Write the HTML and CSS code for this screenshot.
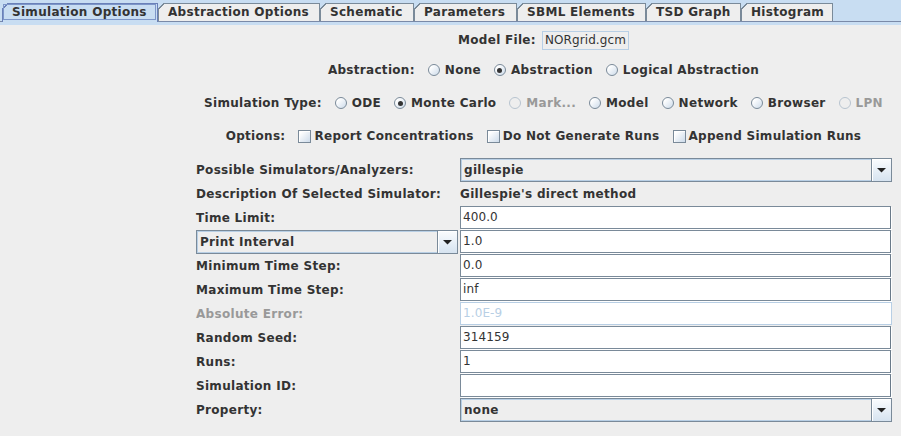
FILE: index.html
```html
<!DOCTYPE html>
<html>
<head>
<meta charset="utf-8">
<link rel="stylesheet" href="styles.css">
</head>
<body>
<div class="window">
  <div class="tabs">
    <div class="tab sel w1"><span class="focus">Simulation Options</span></div>
    <div class="tab w2">Abstraction Options</div>
    <div class="tab w3">Schematic</div>
    <div class="tab w4">Parameters</div>
    <div class="tab w5">SBML Elements</div>
    <div class="tab w6">TSD Graph</div>
    <div class="tab w7">Histogram</div>
  </div>
  <div class="band"></div>
  <div class="content">
    <div class="top">
      <div class="row row-model">
        <span class="lbl">Model File:</span>
        <span class="ro-field">NORgrid.gcm</span>
      </div>
      <div class="row row-opt">
        <span class="lbl">Abstraction:</span>
        <span class="opt"><span class="radio"></span>None</span>
        <span class="opt"><span class="radio on"></span>Abstraction</span>
        <span class="opt"><span class="radio"></span>Logical Abstraction</span>
      </div>
      <div class="row row-opt">
        <span class="lbl">Simulation Type:</span>
        <span class="opt"><span class="radio"></span>ODE</span>
        <span class="opt"><span class="radio on"></span>Monte Carlo</span>
        <span class="opt dis"><span class="radio"></span>Mark...</span>
        <span class="opt"><span class="radio"></span>Model</span>
        <span class="opt"><span class="radio"></span>Network</span>
        <span class="opt"><span class="radio"></span>Browser</span>
        <span class="opt dis"><span class="radio"></span>LPN</span>
      </div>
      <div class="row row-opt">
        <span class="lbl">Options:</span>
        <span class="opt"><span class="check"></span>Report Concentrations</span>
        <span class="opt"><span class="check"></span>Do Not Generate Runs</span>
        <span class="opt"><span class="check"></span>Append Simulation Runs</span>
      </div>
    </div>

    <div class="form">
      <div class="cell lbl">Possible Simulators/Analyzers:</div>
      <div class="combo"><span class="combo-text">gillespie</span><span class="combo-btn"><svg width="9" height="5" viewBox="0 0 9 5"><polygon points="0,0 9,0 4.5,4.5" fill="#222"/></svg></span></div>

      <div class="cell lbl">Description Of Selected Simulator:</div>
      <div class="cell lbl">Gillespie's direct method</div>

      <div class="cell lbl">Time Limit:</div>
      <div class="field">400.0</div>

      <div class="combo"><span class="combo-text">Print Interval</span><span class="combo-btn"><svg width="9" height="5" viewBox="0 0 9 5"><polygon points="0,0 9,0 4.5,4.5" fill="#222"/></svg></span></div>
      <div class="field">1.0</div>

      <div class="cell lbl">Minimum Time Step:</div>
      <div class="field">0.0</div>

      <div class="cell lbl">Maximum Time Step:</div>
      <div class="field">inf</div>

      <div class="cell lbl dis">Absolute Error:</div>
      <div class="field dis">1.0E-9</div>

      <div class="cell lbl">Random Seed:</div>
      <div class="field">314159</div>

      <div class="cell lbl">Runs:</div>
      <div class="field">1</div>

      <div class="cell lbl">Simulation ID:</div>
      <div class="field"></div>

      <div class="cell lbl">Property:</div>
      <div class="combo"><span class="combo-text">none</span><span class="combo-btn"><svg width="9" height="5" viewBox="0 0 9 5"><polygon points="0,0 9,0 4.5,4.5" fill="#222"/></svg></span></div>
    </div>
  </div>
</div>
</body>
</html>
```

FILE: styles.css
```css
html, body {
  margin: 0;
  padding: 0;
  background: #eeeeee;
}
body {
  font-family: "DejaVu Sans", sans-serif;
  font-size: 12px;
  color: #333333;
  width: 901px;
  height: 436px;
  overflow: hidden;
}
.window {
  width: 901px;
  height: 436px;
  display: flex;
  flex-direction: column;
}

/* ---------- tabs ---------- */
.tabs {
  display: flex;
  align-items: flex-end;
  background: #c8ddf2;
  height: 22px;
  box-sizing: border-box;
  padding: 3px 0 0 2px;
  border-bottom: 1px solid #7a8aa8;
}
.tab {
  --b: #7a8a99;
  --bg: #eeeeee;
  height: 18px;
  box-sizing: border-box;
  border-right: 1px solid var(--b);
  padding-left: 10px;
  line-height: 18px;
  font-weight: bold;
  letter-spacing: 0.3px;
  white-space: nowrap;
  flex: none;
  background:
    linear-gradient(var(--b), var(--b)) 6px 0 / 100% 1px no-repeat,
    linear-gradient(var(--b), var(--b)) 0 6px / 1px 100% no-repeat,
    linear-gradient(135deg, transparent 4.2px, var(--b) 4.2px, var(--b) 5.3px, var(--bg) 5.3px);
}
.tab.sel {
  --b: #6a80b8;
  --bg: #c8ddf2;
  position: relative;
  height: 19px;
  margin-bottom: -1px;
  padding-left: 1px;
  padding-top: 1px;
}
.focus {
  display: block;
  height: 16px;
  line-height: 14px;
  box-sizing: border-box;
  border: 1px solid #7d96c8;
  padding-left: 8px;
  margin-right: 1px;
}
.w1 { width: 156px; }
.w2 { width: 162px; }
.w3 { width: 94px; }
.w4 { width: 103px; }
.w5 { width: 129px; }
.w6 { width: 95px; }
.w7 { width: 92px; }

.band {
  height: 3px;
  background: #c8ddf2;
  flex: none;
}
.content {
  flex: 1;
  background: #eeeeee;
}

/* ---------- top options ---------- */
.top {
  margin-left: 186px;
  width: 715px;
  padding-top: 5px;
}
.row {
  display: flex;
  justify-content: center;
  align-items: center;
  height: 20px;
  white-space: nowrap;
}
.row-opt {
  margin-top: 13px;
}
.row-model + .row-opt {
  margin-top: 10px;
}
.lbl {
  font-weight: bold;
  letter-spacing: 0.3px;
}
.ro-field {
  margin-left: 6px;
  height: 19px;
  box-sizing: border-box;
  border: 1px solid #b8cfe5;
  padding: 0 2px;
  line-height: 17px;
  font-weight: normal;
  letter-spacing: 0.1px;
}
.opt {
  display: inline-flex;
  align-items: center;
  gap: 5px;
  margin-left: 13px;
  font-weight: bold;
  letter-spacing: 0.3px;
}
.opt.dis {
  color: #999999;
}
.radio {
  position: relative;
  width: 12px;
  height: 12px;
  box-sizing: border-box;
  border: 1px solid #7a8a99;
  border-radius: 50%;
  background: linear-gradient(135deg, #ffffff 20%, #cddbea);
}
.radio.on::after {
  content: "";
  position: absolute;
  left: 2.5px;
  top: 2.5px;
  width: 5px;
  height: 5px;
  border-radius: 50%;
  background: #333333;
}
.opt.dis .radio {
  border-color: #b8c4d0;
  background: #eeeeee;
}
.check {
  width: 13px;
  height: 13px;
  box-sizing: border-box;
  border: 1px solid #7a8a99;
  background: linear-gradient(135deg, #ffffff 15%, #cddbea);
  box-shadow: inset 1px 1px 0 #ffffff;
}
.opt .check {
  margin-right: -2px;
}

/* ---------- form ---------- */
.form {
  margin-top: 12px;
  margin-left: 196px;
  display: grid;
  grid-template-columns: 262px 432px;
  column-gap: 2px;
  grid-auto-rows: 24px;
}
.cell {
  display: flex;
  align-items: center;
  white-space: nowrap;
}
.cell.dis {
  color: #999999;
}
.field {
  height: 23px;
  box-sizing: border-box;
  border: 1px solid #7a8a99;
  border-right-color: #6a7a89;
  box-shadow: 1px 1px 0 #ffffff;
  background: #ffffff;
  padding: 0 2px;
  line-height: 21px;
  font-weight: normal;
  letter-spacing: 0.1px;
  width: 431px;
}
.field.dis {
  border-color: #b8cfe5;
  box-shadow: none;
  color: #b8cfe5;
  width: 432px;
}
.combo {
  display: flex;
  height: 24px;
  box-sizing: border-box;
  border: 1px solid #7a8a99;
  background: #eeeeee;
}
.combo-text {
  flex: 1;
  font-weight: bold;
  letter-spacing: 0.3px;
  line-height: 20px;
  padding-left: 2px;
  border: 1px solid #b8cfe5;
  border-right: none;
}
.combo-btn {
  width: 19px;
  flex: none;
  border-left: 1px solid #7a8a99;
  background: linear-gradient(#fafcfe, #d6e3f0);
  box-shadow: inset 1px 1px 0 #ffffff;
  display: flex;
  align-items: center;
  justify-content: center;
}
.combo-btn svg {
  display: block;
  margin-top: 1px;
}
```
